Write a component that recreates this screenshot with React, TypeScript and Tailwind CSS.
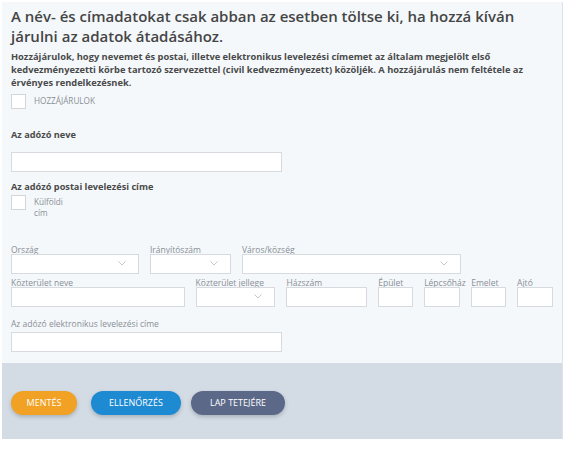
import React from 'react';

const Chevron = () => (
  <svg width="8" height="5" viewBox="0 0 8 5" className="text-[#c2c8ce]">
    <path d="M0.5 0.5 L4 4 L7.5 0.5" fill="none" stroke="currentColor" strokeWidth="1" />
  </svg>
);

const Field = ({ label, w, select }: { label: string; w: string; select?: boolean }) => (
  <div className={`flex flex-col ${w}`}>
    <span className="text-[8.5px] leading-[10px] text-[#8a8f95] h-[10px] whitespace-nowrap">{label}</span>
    <div className="h-[20px] mt-[-1px] bg-white border border-[#d7dbe0] flex items-center justify-end pr-[12px]">
      {select && <Chevron />}
    </div>
  </div>
);

const Box = () => <div className="w-[15px] h-[15px] bg-white border border-[#d3d7dc] shrink-0" />;

const btnFont = { fontFamily: '"Liberation Sans Narrow", "Open Sans", sans-serif' };

export default function App() {
  return (
    <div className="w-[570px] h-[450px] bg-white px-[2px] pt-[2px]" style={{ fontFamily: '"Open Sans", "Liberation Sans", sans-serif' }}>
      <div className="w-[561px] bg-[#f4f8fb] border-r border-[#dfe3e7]">
        <div className="px-[9px] pt-[4px] pb-[11px]">
          <h1 className="text-[15px] leading-[20px] font-semibold text-[#454545]">
            A név- és címadatokat csak abban az esetben töltse ki, ha hozzá kíván járulni az adatok átadásához.
          </h1>
          <p className="mt-[4px] w-[550px] text-[9.3px] leading-[13px] font-bold text-[#4a4a4a]">
            Hozzájárulok, hogy nevemet és postai, illetve elektronikus levelezési címemet az általam megjelölt első kedvezményezetti körbe tartozó szervezettel (civil kedvezményezett) közöljék. A hozzájárulás nem feltétele az érvényes rendelkezésnek.
          </p>
          <div className="mt-[5px] flex items-center gap-[8px]">
            <Box />
            <span className="text-[8.2px] text-[#8a8f95]">HOZZÁJÁRULOK</span>
          </div>

          <div className="mt-[19px] text-[9.2px] font-bold text-[#4a4a4a]">Az adózó neve</div>
          <div className="mt-[10px] w-[271px] h-[20px] bg-white border border-[#d7dbe0]" />

          <div className="mt-[8px] text-[9.2px] font-bold text-[#4a4a4a]">Az adózó postai levelezési címe</div>
          <div className="mt-[1px] flex items-start gap-[8px]">
            <Box />
            <span className="text-[8.2px] leading-[11px] text-[#8a8f95] mt-[1px]">Külföldi<br />cím</span>
          </div>

          <div className="mt-[27px] flex gap-[11px]">
            <Field label="Ország" w="w-[128px]" select />
            <Field label="Irányítószám" w="w-[81px]" select />
            <Field label="Város/község" w="w-[219px]" select />
          </div>
          <div className="mt-[4px] flex gap-[11px]">
            <Field label="Közterület neve" w="w-[174px]" />
            <Field label="Közterület jellege" w="w-[80px]" select />
            <Field label="Házszám" w="w-[81px]" />
            <Field label="Épület" w="w-[35px]" />
            <Field label="Lépcsőház" w="w-[36px]" />
            <Field label="Emelet" w="w-[35px]" />
            <Field label="Ajtó" w="w-[36px]" />
          </div>
          <div className="mt-[12px] flex flex-col w-[271px]">
            <span className="text-[8.5px] leading-[10px] text-[#8a8f95]">Az adózó elektronikus levelezési címe</span>
            <div className="mt-[3px] h-[20px] bg-white border border-[#d7dbe0]" />
          </div>
        </div>
        <div className="h-[76px] bg-[#d3dce5] flex items-center px-[9px] pt-[4px]">
          <button className="h-[24px] w-[66px] rounded-full bg-[#f1a123] text-white text-[9px] shadow-[0_2px_4px_rgba(0,0,0,0.2)]" style={btnFont}>MENTÉS</button>
          <button className="ml-[14px] h-[24px] w-[90px] rounded-full bg-[#1e8ad2] text-white text-[9px] shadow-[0_2px_4px_rgba(0,0,0,0.2)]" style={btnFont}>ELLENŐRZÉS</button>
          <button className="ml-[10px] h-[24px] w-[94px] rounded-full bg-[#5b6888] text-white text-[9px] shadow-[0_2px_4px_rgba(0,0,0,0.2)]" style={btnFont}>LAP TETEJÉRE</button>
        </div>
      </div>
    </div>
  );
}
